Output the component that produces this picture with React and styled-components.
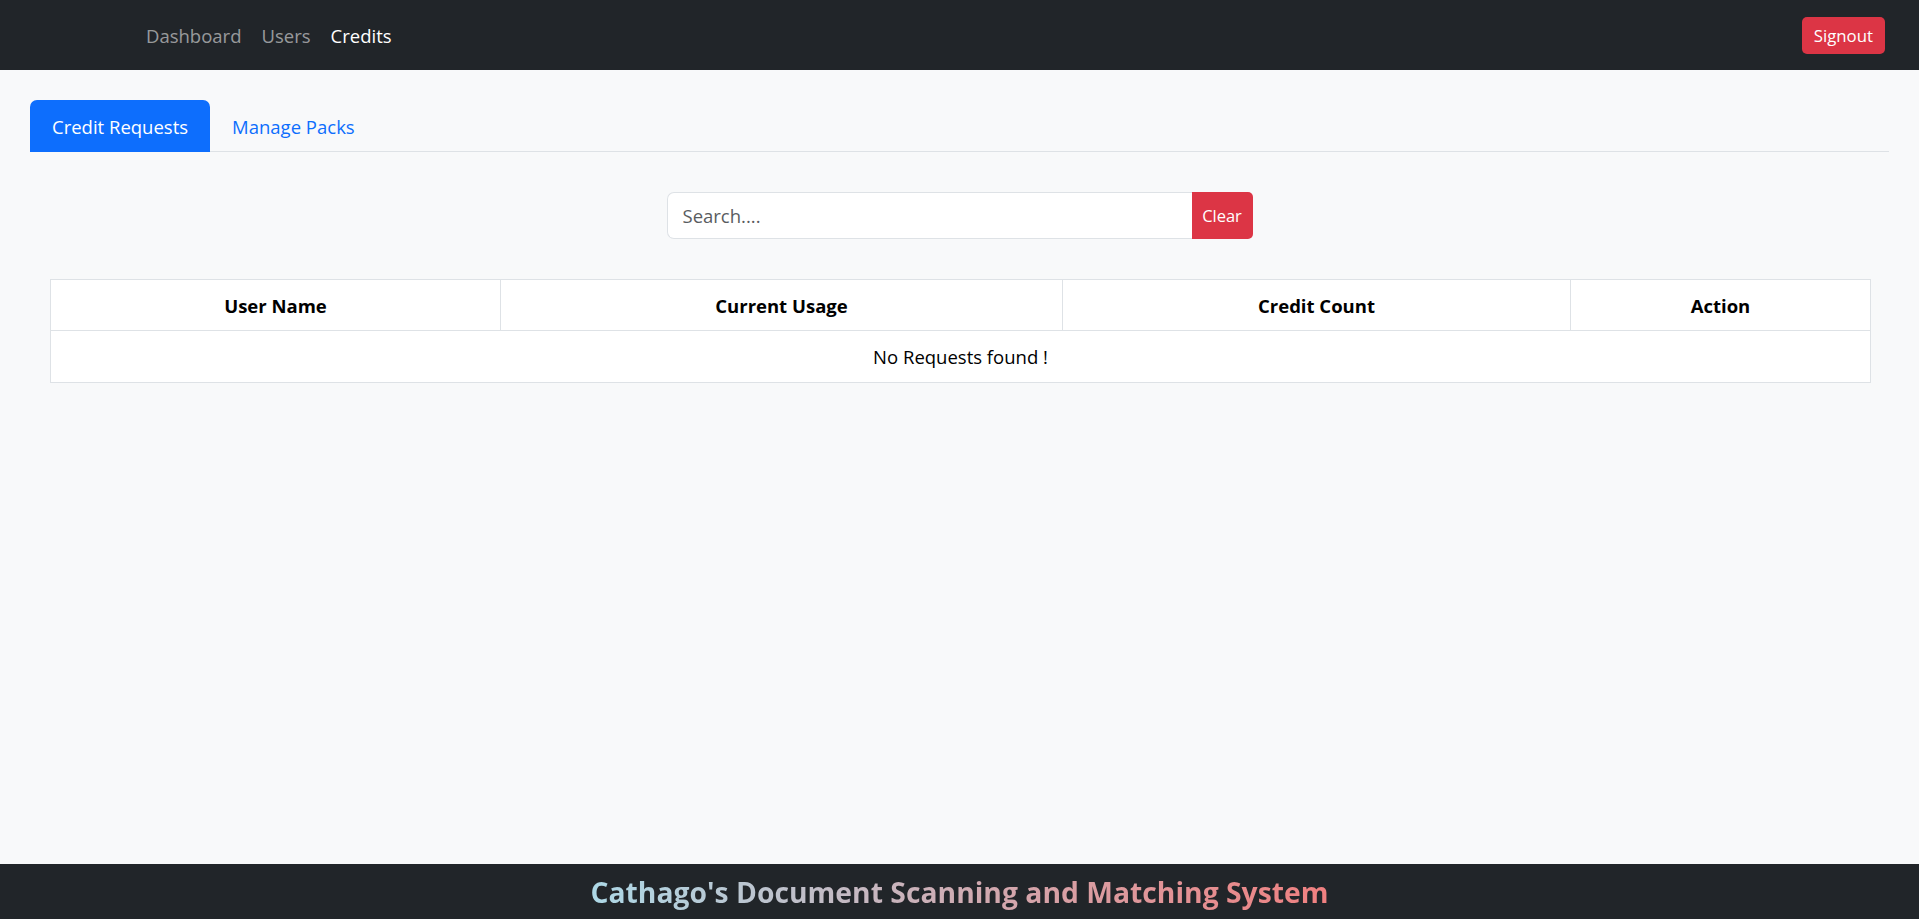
import React, { useState } from "react";
import styled, { createGlobalStyle } from "styled-components";

const GlobalStyle = createGlobalStyle`
  * { box-sizing: border-box; }
  body {
    margin: 0;
    background: #f8f9fa;
    font-family: "Open Sans", "Noto Sans", sans-serif;
    color: #212529;
  }
`;

const Page = styled.div`
  min-height: 100vh;
  display: flex;
  flex-direction: column;
`;

const Navbar = styled.nav`
  height: 70px;
  background: #212529;
  display: flex;
  align-items: center;
  justify-content: space-between;
  padding: 0 34px 0 136px;
`;

const NavLinks = styled.div`
  display: flex;
  align-items: center;
  padding-top: 2px;
`;

const NavLink = styled.a`
  padding: 0 10px;
  font-size: 18.5px;
  line-height: 30px;
  color: ${(p) => (p.active ? "#fff" : "rgba(255,255,255,0.55)")};
  text-decoration: none;
  cursor: pointer;
`;

const SignoutButton = styled.button`
  background: #dc3545;
  color: #fff;
  border: none;
  border-radius: 5px;
  padding: 0 12px;
  height: 37px;
  font-family: inherit;
  font-size: 16.8px;
  cursor: pointer;
`;

const Main = styled.main`
  flex: 1;
  padding: 30px 30px 0;
`;

const Tabs = styled.div`
  display: flex;
  border-bottom: 1px solid #dee2e6;
`;

const Tab = styled.button`
  height: 52px;
  margin-bottom: -1px;
  padding: 0 22px;
  border: none;
  border-radius: 7px 7px 0 0;
  background: ${(p) => (p.active ? "#0d6efd" : "transparent")};
  color: ${(p) => (p.active ? "#fff" : "#0d6efd")};
  font-family: inherit;
  font-size: 18.5px;
  cursor: pointer;
`;

const SearchRow = styled.div`
  display: flex;
  justify-content: center;
  margin-top: 40px;
`;

const SearchGroup = styled.div`
  display: flex;
  width: 586px;
  height: 47px;
`;

const SearchInput = styled.input`
  flex: 1;
  min-width: 0;
  border: 1px solid #dee2e6;
  border-right: none;
  border-radius: 7px 0 0 7px;
  padding: 0 15px;
  font-family: inherit;
  font-size: 18.5px;
  color: #212529;
  background: #fff;
  outline: none;

  &::placeholder {
    color: #595c5f;
  }
`;

const ClearButton = styled.button`
  width: 61px;
  border: none;
  border-radius: 0 5px 5px 0;
  background: #dc3545;
  color: #fff;
  font-family: inherit;
  font-size: 16.5px;
  cursor: pointer;
`;

const Table = styled.table`
  width: calc(100% - 40px);
  margin: 40px 20px 0;
  border-collapse: collapse;
  background: #fff;
  table-layout: fixed;
`;

const Th = styled.th`
  height: 51px;
  padding: 0 10px;
  border: 1px solid #dee2e6;
  font-size: 18.5px;
  font-weight: 700;
  color: #000;
  text-align: center;
`;

const Td = styled.td`
  height: 52px;
  padding: 0 10px;
  border: 1px solid #dee2e6;
  font-size: 18.5px;
  color: #000;
  text-align: center;
`;

const Footer = styled.footer`
  height: 55px;
  background: #212529;
  display: flex;
  align-items: center;
  justify-content: center;
`;

const FooterTitle = styled.h4`
  margin: 0;
  font-size: 28.3px;
  font-weight: 700;
  background: linear-gradient(to right, #add8e6, #f08080);
  -webkit-background-clip: text;
  background-clip: text;
  color: transparent;
`;

const columns = [
  { label: "User Name", width: 450 },
  { label: "Current Usage", width: 562 },
  { label: "Credit Count", width: 508 },
  { label: "Action", width: 300 },
];

export default function App() {
  const [tab, setTab] = useState("requests");
  const [query, setQuery] = useState("");

  return (
    <Page>
      <GlobalStyle />
      <Navbar>
        <NavLinks>
          <NavLink>Dashboard</NavLink>
          <NavLink>Users</NavLink>
          <NavLink active>Credits</NavLink>
        </NavLinks>
        <SignoutButton>Signout</SignoutButton>
      </Navbar>

      <Main>
        <Tabs>
          <Tab active={tab === "requests"} onClick={() => setTab("requests")}>
            Credit Requests
          </Tab>
          <Tab active={tab === "packs"} onClick={() => setTab("packs")}>
            Manage Packs
          </Tab>
        </Tabs>

        <SearchRow>
          <SearchGroup>
            <SearchInput
              placeholder="Search...."
              value={query}
              onChange={(e) => setQuery(e.target.value)}
            />
            <ClearButton onClick={() => setQuery("")}>Clear</ClearButton>
          </SearchGroup>
        </SearchRow>

        <Table>
          <colgroup>
            {columns.map((c) => (
              <col key={c.label} style={{ width: c.width }} />
            ))}
          </colgroup>
          <thead>
            <tr>
              {columns.map((c) => (
                <Th key={c.label}>{c.label}</Th>
              ))}
            </tr>
          </thead>
          <tbody>
            <tr>
              <Td colSpan={4}>No Requests found !</Td>
            </tr>
          </tbody>
        </Table>
      </Main>

      <Footer>
        <FooterTitle>Cathago's Document Scanning and Matching System</FooterTitle>
      </Footer>
    </Page>
  );
}
